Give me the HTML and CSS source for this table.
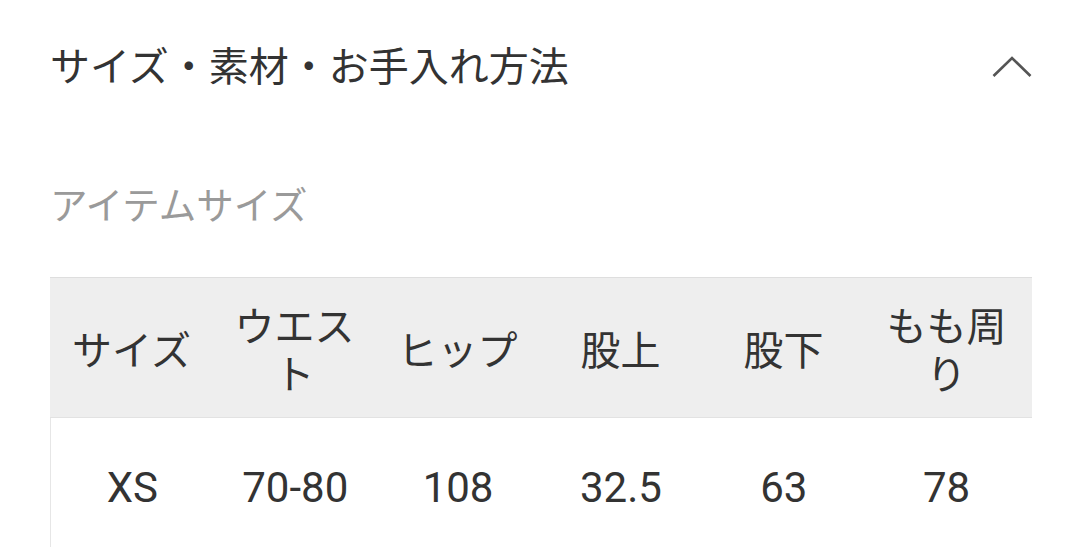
FILE: index.html
```html
<!DOCTYPE html>
<html lang="ja">
<head>
<meta charset="utf-8">
<link rel="stylesheet" href="styles.css">
</head>
<body>
<div class="page">
  <div class="header">
    <h2 class="title">サイズ・素材・お手入れ方法</h2>
    <svg class="chevron" width="40" height="22" viewBox="0 0 40 22"><polyline points="1.5,20 20,2 38.5,20" fill="none" stroke="#555" stroke-width="2.6"/></svg>
  </div>
  <div class="subtitle">アイテムサイズ</div>
  <div class="table">
    <div class="row head">
      <div class="cell">サイズ</div>
      <div class="cell">ウエスト</div>
      <div class="cell">ヒップ</div>
      <div class="cell">股上</div>
      <div class="cell">股下</div>
      <div class="cell">もも周り</div>
    </div>
    <div class="row body">
      <div class="cell">XS</div>
      <div class="cell">70-80</div>
      <div class="cell">108</div>
      <div class="cell">32.5</div>
      <div class="cell">63</div>
      <div class="cell">78</div>
    </div>
  </div>
</div>
</body>
</html>
```
FILE: styles.css
```css
html, body {
  margin: 0;
  padding: 0;
  background: #fff;
}
body {
  font-family: Roboto, "Noto Sans CJK JP", sans-serif;
  color: #333;
  overflow: hidden;
}
.page {
  padding: 0 48px 0 50px;
}
.header {
  height: 136px;
  display: flex;
  align-items: center;
  justify-content: space-between;
}
.title {
  margin: 0;
  font-weight: normal;
  font-size: 40px;
  line-height: 50px;
  color: #333;
}
.chevron {
  display: block;
  margin-top: -3px;
}
.subtitle {
  margin-top: 45px;
  font-size: 37.5px;
  line-height: 50px;
  color: #9a9a9a;
}
.table {
  margin-top: 46px;
  border-top: 1px solid #dedede;
}
.row {
  display: grid;
  grid-template-columns: repeat(6, 1fr);
  align-items: center;
  padding-right: 4px;
}
.head {
  height: 139px;
  background: #eeeeee;
  border-bottom: 1px solid #e2e2e2;
}
.body {
  height: 140px;
  border-left: 1px solid #e6e6e6;
}
.cell {
  text-align: center;
  padding: 0 16px;
  font-size: 40px;
  line-height: 48px;
  color: #333;
}
.head .cell {
  padding-top: 8px;
}
.body .cell {
  font-size: 42px;
}
```
